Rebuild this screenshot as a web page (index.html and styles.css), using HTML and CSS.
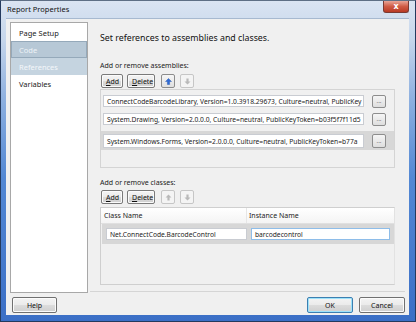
FILE: index.html
```html
<!DOCTYPE html>
<html lang="en">
	<head>
		<meta charset="UTF-8" />
		<title>Report Properties</title>
		<link rel="stylesheet" href="styles.css">
	</head>
	<body>
		<div class="window">
			<div class="titlebar">
				<span class="title">Report Properties</span>
				<span class="close">x</span>
			</div>
			<div class="client">
				<div class="body">
					<ul class="nav">
						<li>Page Setup</li>
						<li class="selected">Code</li>
						<li class="hover">References</li>
						<li>Variables</li>
					</ul>
					<div class="panel">
						<h1>Set references to assemblies and classes.</h1>
						<div class="label">Add or remove assemblies:</div>
						<div class="toolbar">
							<button class="btn"><u>A</u>dd</button>
							<button class="btn"><u>D</u>elete</button>
							<button class="arrow up on">
								<svg width="7" height="7" viewBox="0 0 7 7"><path d="M3.5 0.5 L6.5 3.5 L4.6 3.5 L4.6 6.5 L2.4 6.5 L2.4 3.5 L0.5 3.5 Z" /></svg>
							</button>
							<button class="arrow">
								<svg width="7" height="7" viewBox="0 0 7 7"><path d="M3.5 6.5 L6.5 3.5 L4.6 3.5 L4.6 0.5 L2.4 0.5 L2.4 3.5 L0.5 3.5 Z" /></svg>
							</button>
						</div>
						<div class="list">
							<div class="row">
								<div class="field">ConnectCodeBarcodeLibrary, Version=1.0.3918.29673, Culture=neutral, PublicKey</div>
								<button class="dots">...</button>
							</div>
							<div class="row">
								<div class="field">System.Drawing, Version=2.0.0.0, Culture=neutral, PublicKeyToken=b03f5f7f11d5</div>
								<button class="dots">...</button>
							</div>
							<div class="row current">
								<div class="field">System.Windows.Forms, Version=2.0.0.0, Culture=neutral, PublicKeyToken=b77a</div>
								<button class="dots">...</button>
							</div>
						</div>
						<div class="label">Add or remove classes:</div>
						<div class="toolbar">
							<button class="btn"><u>A</u>dd</button>
							<button class="btn"><u>D</u>elete</button>
							<button class="arrow">
								<svg width="7" height="7" viewBox="0 0 7 7"><path d="M3.5 0.5 L6.5 3.5 L4.6 3.5 L4.6 6.5 L2.4 6.5 L2.4 3.5 L0.5 3.5 Z" /></svg>
							</button>
							<button class="arrow">
								<svg width="7" height="7" viewBox="0 0 7 7"><path d="M3.5 6.5 L6.5 3.5 L4.6 3.5 L4.6 0.5 L2.4 0.5 L2.4 3.5 L0.5 3.5 Z" /></svg>
							</button>
						</div>
						<div class="grid">
							<div class="grid-head">
								<div class="col1">Class Name</div>
								<div class="col2">Instance Name</div>
							</div>
							<div class="grid-row">
								<div class="field col1">Net.ConnectCode.BarcodeControl</div>
								<div class="field col2 focus">barcodecontrol</div>
							</div>
						</div>
					</div>
				</div>
				<div class="footer">
					<button class="btn wide">Help</button>
					<span class="spacer"></span>
					<button class="btn wide default">OK</button>
					<button class="btn wide">Cancel</button>
				</div>
			</div>
		</div>
	</body>
</html>
```

FILE: styles.css
```css
* {
	padding: 0;
	margin: 0;
	box-sizing: border-box;
}
body {
	font-family: "Noto Sans", "Open Sans", sans-serif;
	font-size: 7px;
	color: #1b1b1b;
	background: #fff;
}
.window {
	width: 416px;
	height: 322px;
	display: flex;
	flex-direction: column;
	border: 1px solid #243a5e;
	border-top-color: #5e6f85;
	background: linear-gradient(#dae4f2 0%, #c6d6eb 12%, #8fb1e0 30%, #5388d4 55%, #3b6fc6 100%);
}
.titlebar {
	height: 17px;
	display: flex;
	justify-content: space-between;
	align-items: flex-start;
	padding: 0 6px 0 6px;
}
.title {
	font-size: 7.5px;
	line-height: 17px;
	color: #111;
}
.close {
	width: 26px;
	height: 12px;
	border: 1px solid #7a3a33;
	border-top: none;
	border-radius: 0 0 3px 3px;
	background: linear-gradient(#e9a597, #cf5b45 50%, #b93a25);
	color: #fff;
	font-family: "DejaVu Sans", sans-serif;
	font-weight: bold;
	font-size: 8px;
	line-height: 11px;
	text-align: center;
}
.client {
	flex: 1;
	margin: 0 6px 6px 5px;
	padding: 3px 4px 2px 4px;
	background: #f0f0f0;
	border-top: 1px solid #a7b9d0;
	display: flex;
	flex-direction: column;
}
.body {
	display: flex;
	align-items: flex-start;
}
.nav {
	list-style: none;
	width: 78px;
	height: 271px;
	background: #fff;
	border: 1px solid #a8a8a8;
	padding-top: 1px;
}
.nav li {
	height: 17px;
	line-height: 17px;
	padding-left: 7px;
	font-size: 7.5px;
	border: 1px solid transparent;
}
.nav li.selected {
	background: #b7c8d6;
	border-color: #95a9ba;
	color: #eef3f7;
}
.nav li.hover {
	background: #c5d4e0;
	color: #f4f7fa;
}
.panel {
	flex: 1;
	height: 270px;
	margin: 0 0 0 2px;
	padding: 0 10px 0 10px;
	border-bottom: 1px solid #d5d5d5;
}
h1 {
	font-size: 8.8px;
	font-weight: normal;
	line-height: 12px;
	margin-top: 10px;
	color: #111;
}
.label {
	line-height: 10px;
	margin-top: 17px;
}
.label + .toolbar {
	margin-top: 3px;
}
.list + .label {
	margin-top: 10px;
}
.list + .label + .toolbar {
	margin-top: 2px;
}
.toolbar {
	display: flex;
	height: 14px;
}
.btn {
	font-family: inherit;
	font-size: 7px;
	color: #111;
	height: 14px;
	padding: 0 4px;
	border: 1px solid #7a7a7a;
	border-radius: 2px;
	background: linear-gradient(#f4f4f4 0%, #ebebeb 48%, #dcdcdc 52%, #cfcfcf 100%);
	box-shadow: inset 0 0 0 1px #fbfbfb;
}
.toolbar .btn {
	margin-left: 1px;
	margin-right: 3px;
}
.toolbar .btn:first-child {
	width: 22px;
}
.toolbar .btn:nth-child(2) {
	width: 28px;
}
.arrow {
	width: 14px;
	height: 14px;
	margin-left: 3px;
	margin-right: 2px;
	border: 1px solid #c6c6c6;
	border-radius: 2px;
	background: #f4f4f4;
	display: flex;
	align-items: center;
	justify-content: center;
}
.arrow path {
	fill: #b9b9b9;
}
.arrow.on {
	border-color: #8c8c8c;
	background: linear-gradient(#f6f6f6, #e0e0e0);
}
.arrow.on path {
	fill: #2e6ad6;
	stroke: #1d4fa8;
	stroke-width: 0.4;
}
.list {
	margin-top: 1px;
	height: 79px;
	border: 1px solid #d4d4d4;
	padding-top: 2px;
}
.row {
	height: 18px;
	display: flex;
	align-items: center;
	padding: 0 8px 0 2px;
}
.row.current {
	height: 19px;
	margin-top: 3px;
	background: #d7d7d7;
}
.field {
	height: 12px;
	line-height: 11px;
	padding-left: 3px;
	font-size: 6.7px;
	background: #fff;
	border: 1px solid #c9ccd2;
	white-space: nowrap;
	overflow: hidden;
}
.row .field {
	width: 261px;
	margin-right: 8px;
}
.row.current .field {
	height: 14px;
	line-height: 13px;
}
.dots {
	width: 14px;
	height: 13px;
	font-family: inherit;
	font-size: 6px;
	line-height: 6px;
	color: #555;
	border: 1px solid #8d8d8d;
	border-radius: 2px;
	background: linear-gradient(#f5f5f5, #dedede);
}
.row.current .dots {
	height: 14px;
}
.grid {
	margin-top: 3px;
	height: 78px;
	width: 295px;
	border: 1px solid #cfcfcf;
	border-right-color: #e2e2e2;
}
.grid-head {
	display: flex;
	height: 16px;
	line-height: 15px;
	background: linear-gradient(#ffffff, #f4f4f4);
	border-bottom: 1px solid #e0e0e0;
}
.grid-head .col1 {
	width: 146px;
	padding-left: 3px;
	border-right: 1px solid #e6e6e6;
}
.grid-head .col2 {
	padding-left: 2px;
}
.grid-row {
	display: flex;
	align-items: center;
	height: 20px;
	margin-left: 1px;
	background: #d7d7d7;
}
.grid-row .col1 {
	width: 141px;
	margin-left: 4px;
}
.grid-row .col2 {
	width: 139px;
	margin-left: 4px;
}
.field.focus {
	border-color: #8ebde9;
}
.footer {
	display: flex;
	margin-top: 4px;
	padding: 0 0 0 2px;
}
.spacer {
	flex: 1;
}
.btn.wide {
	width: 46px;
	height: 16px;
	margin-left: 6px;
	border-color: #707070;
}
.btn.wide:first-child {
	margin-left: 0;
	width: 45px;
}
.btn.default {
	border-color: #3c7fb1;
	box-shadow: inset 0 0 0 1px #9ee2fa;
}
```
